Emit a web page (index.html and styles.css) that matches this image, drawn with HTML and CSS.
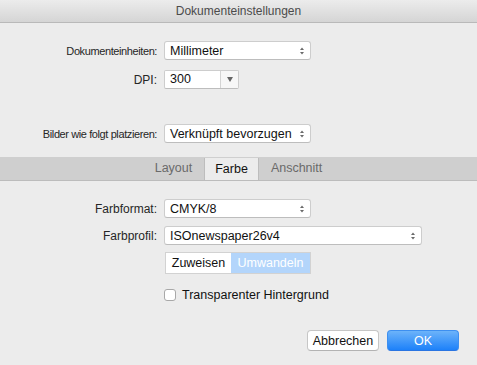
FILE: index.html
```html
<!DOCTYPE html>
<html>

<head>
	<link rel="stylesheet" href="styles.css">
</head>

<body>
	<div class="titlebar">Dokumenteinstellungen</div>

	<div class="row row-units">
		<label class="label narrow">Dokumenteinheiten:</label>
		<div class="select w-short">
			<span>Millimeter</span>
			<svg class="updown" width="4" height="8" viewBox="0 0 4 8"><path d="M0 3L2 0.5L4 3Z M0 5L2 7.5L4 5Z" /></svg>
		</div>
	</div>

	<div class="row row-dpi">
		<label class="label">DPI:</label>
		<div class="combo">
			<span class="combo-value">300</span>
			<span class="combo-button">
				<svg width="6" height="5" viewBox="0 0 6 5"><path d="M0 0H6L3 5Z" /></svg>
			</span>
		</div>
	</div>

	<div class="row row-images">
		<label class="label narrow">Bilder wie folgt platzieren:</label>
		<div class="select w-short">
			<span>Verknüpft bevorzugen</span>
			<svg class="updown" width="4" height="8" viewBox="0 0 4 8"><path d="M0 3L2 0.5L4 3Z M0 5L2 7.5L4 5Z" /></svg>
		</div>
	</div>

	<div class="tabbar">
		<div class="tab">Layout</div>
		<div class="tab active">Farbe</div>
		<div class="tab">Anschnitt</div>
	</div>

	<div class="row row-format">
		<label class="label">Farbformat:</label>
		<div class="select w-short">
			<span>CMYK/8</span>
			<svg class="updown" width="4" height="8" viewBox="0 0 4 8"><path d="M0 3L2 0.5L4 3Z M0 5L2 7.5L4 5Z" /></svg>
		</div>
	</div>

	<div class="row row-profile">
		<label class="label">Farbprofil:</label>
		<div class="select w-long">
			<span>ISOnewspaper26v4</span>
			<svg class="updown" width="4" height="8" viewBox="0 0 4 8"><path d="M0 3L2 0.5L4 3Z M0 5L2 7.5L4 5Z" /></svg>
		</div>
	</div>

	<div class="row row-segment">
		<div class="spacer"></div>
		<div class="segmented">
			<span class="seg">Zuweisen</span>
			<span class="seg seg-on">Umwandeln</span>
		</div>
	</div>

	<div class="row row-check">
		<div class="spacer"></div>
		<span class="checkbox"></span>
		<span class="check-label">Transparenter Hintergrund</span>
	</div>

	<div class="buttons">
		<button class="btn">Abbrechen</button>
		<button class="btn btn-default">OK</button>
	</div>
</body>

</html>
```

FILE: styles.css
```css
body {
	margin: 0;
	width: 477px;
	height: 365px;
	overflow: hidden;
	background: #ececec;
	font-family: "Liberation Sans", Arial, sans-serif;
	color: #222;
}

.titlebar {
	height: 22px;
	line-height: 22px;
	border-bottom: 1px solid #b9b9b9;
	background: linear-gradient(#ececec, #d5d5d5);
	text-align: center;
	font-size: 12px;
	color: #4b4b4b;
}

.row {
	display: flex;
	align-items: center;
}

.label {
	width: 157px;
	margin-right: 7px;
	text-align: right;
	font-size: 12px;
	color: #262626;
	flex-shrink: 0;
}

.label.narrow {
	font-size: 11px;
	letter-spacing: -0.4px;
}

.spacer {
	width: 164px;
	flex-shrink: 0;
}

.row-units {
	margin-top: 18px;
}

.row-dpi {
	margin-top: 10px;
}

.row-images {
	margin-top: 35px;
}

.row-format {
	margin-top: 18px;
}

.row-profile {
	margin-top: 8px;
}

.row-segment {
	margin-top: 7px;
	padding-left: 1px;
}

.row-check {
	margin-top: 14px;
}

.select {
	box-sizing: border-box;
	height: 19px;
	display: flex;
	align-items: center;
	justify-content: space-between;
	padding: 0 6px 0 5px;
	background: #fff;
	border: 1px solid #cdcdcd;
	border-bottom-color: #bdbdbd;
	border-radius: 3px;
	font-size: 12.5px;
	color: #111;
}

.w-short {
	width: 147px;
}

.w-long {
	width: 258px;
}

.updown path {
	fill: #6a6a6a;
}

.combo {
	box-sizing: border-box;
	width: 75px;
	height: 19px;
	display: flex;
	background: #fff;
	border: 1px solid #cdcdcd;
	border-bottom-color: #bdbdbd;
	border-radius: 2px;
	font-size: 12.5px;
	color: #111;
}

.combo-value {
	flex: 1;
	padding-left: 5px;
	line-height: 17px;
}

.combo-button {
	width: 17px;
	display: flex;
	align-items: center;
	justify-content: center;
	border-left: 1px solid #d4d4d4;
	background: #f7f7f7;
}

.combo-button path {
	fill: #666;
}

.tabbar {
	margin-top: 14px;
	height: 23px;
	display: flex;
	justify-content: center;
	background: #cfcfcf;
	border-bottom: 1px solid #bcbcbc;
}

.tab {
	padding: 0 11.5px;
	line-height: 23px;
	font-size: 12.5px;
	color: #6a6a6a;
}

.tab.active {
	margin-top: 1px;
	line-height: 22px;
	background: #ececec;
	border-left: 1px solid #bdbdbd;
	border-right: 1px solid #bdbdbd;
	padding: 0 10.5px;
	color: #111;
}

.segmented {
	box-sizing: border-box;
	height: 22px;
	display: flex;
	border: 1px solid #d2d2d2;
	font-size: 12.5px;
}

.seg {
	display: flex;
	align-items: center;
	justify-content: center;
	background: #fff;
	color: #111;
	width: 65px;
}

.seg-on {
	width: 79px;
	background: #b3d5fb;
	color: #fff;
}

.checkbox {
	box-sizing: border-box;
	width: 12px;
	height: 12px;
	background: #fff;
	border: 1px solid #a8a8a8;
	border-radius: 3px;
}

.check-label {
	margin-left: 6px;
	font-size: 12.5px;
	color: #111;
}

.buttons {
	margin-top: 28px;
	padding-right: 18px;
	display: flex;
	justify-content: flex-end;
	gap: 8px;
}

.btn {
	box-sizing: border-box;
	width: 72px;
	height: 21px;
	padding: 0;
	font-family: "Liberation Sans", Arial, sans-serif;
	font-size: 12.5px;
	color: #111;
	background: #fff;
	border: 1px solid #c6c6c6;
	border-bottom-color: #b3b3b3;
	border-radius: 4px;
}

.btn-default {
	color: #fff;
	background: linear-gradient(#6cb3fa, #1d81f9);
	border: 1px solid #3d8ff0;
	border-bottom-color: #2a75e2;
}
```
